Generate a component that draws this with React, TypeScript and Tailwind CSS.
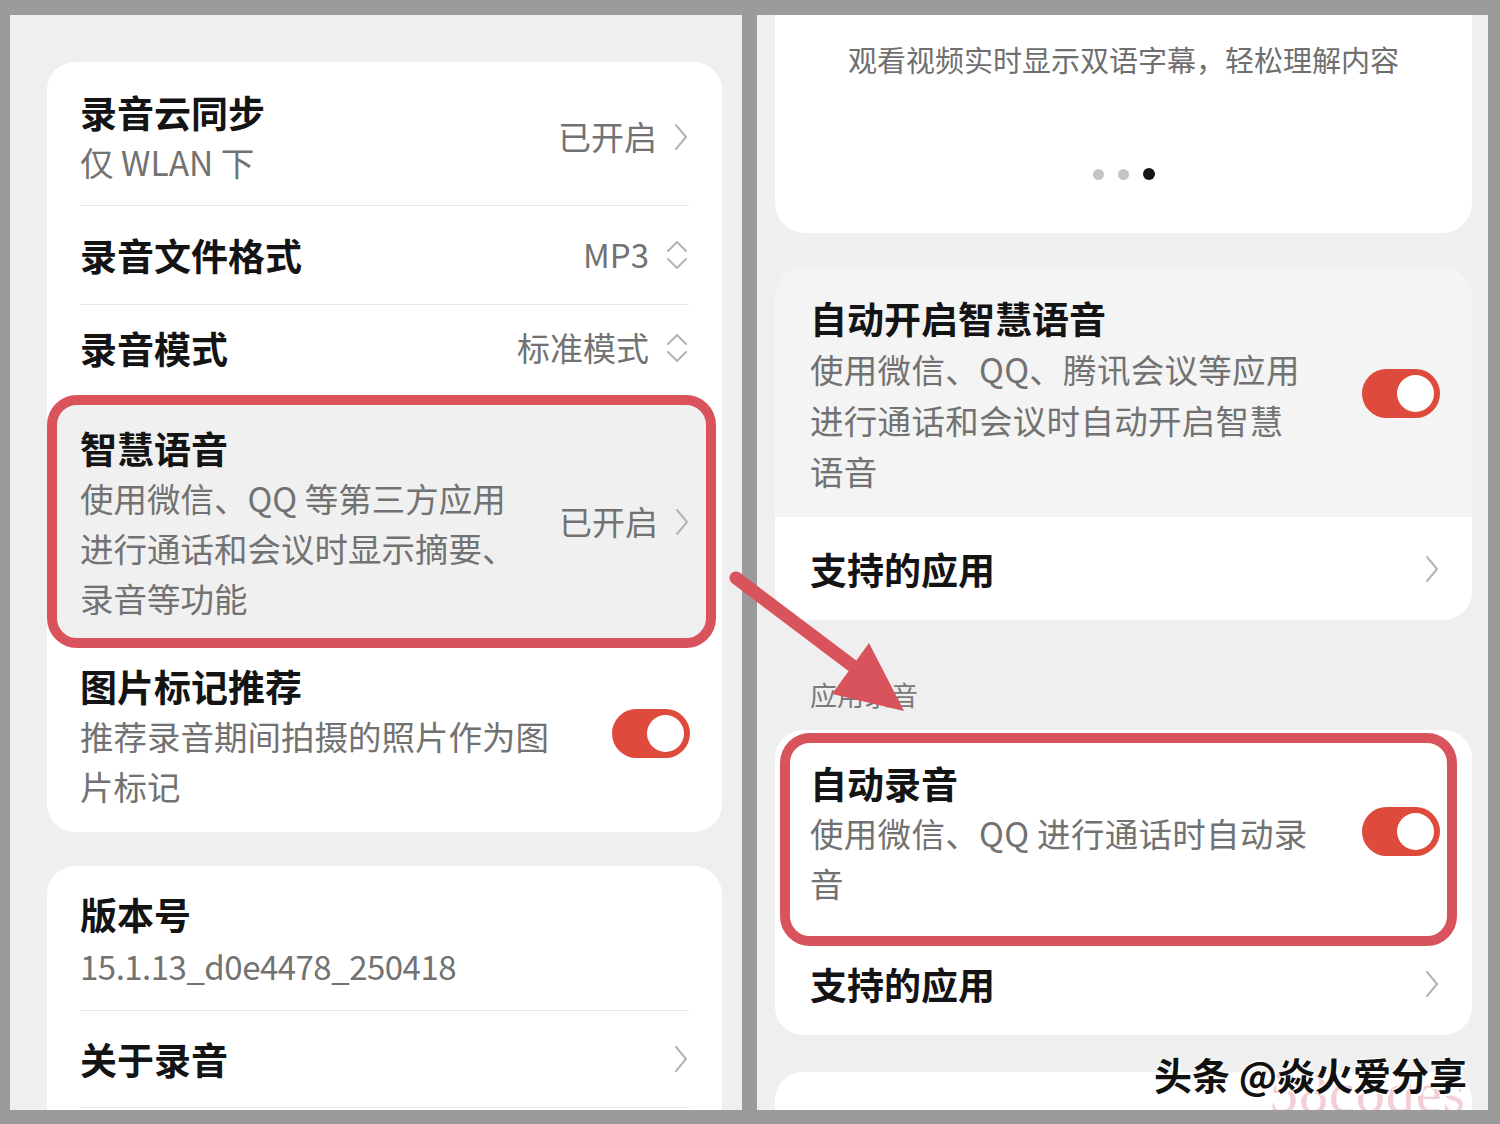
import React from 'react'

const FONT = "font-['Noto_Sans_CJK_SC',sans-serif]"

function ChevronRight() {
  return (
    <svg width="16" height="30" viewBox="0 0 16 30" fill="none">
      <path d="M3 3 L13 15 L3 27" stroke="#b4b4b4" strokeWidth="2" strokeLinecap="round" strokeLinejoin="round" />
    </svg>
  )
}

function UpDown() {
  return (
    <svg width="24" height="36" viewBox="0 0 24 36" fill="none">
      <path d="M3 14 L12 5 L21 14" stroke="#b4b4b4" strokeWidth="2" strokeLinecap="round" strokeLinejoin="round" />
      <path d="M3 22 L12 31 L21 22" stroke="#b4b4b4" strokeWidth="2" strokeLinecap="round" strokeLinejoin="round" />
    </svg>
  )
}

function Toggle() {
  return (
    <div className="flex h-[49px] w-[78px] shrink-0 items-center justify-end rounded-full bg-[#de4a3b] pr-[6px]">
      <div className="h-[37px] w-[37px] rounded-full bg-white" />
    </div>
  )
}

function Title({ children }: { children: React.ReactNode }) {
  return <div className="text-[37px] leading-[50px] font-semibold text-[#141414]">{children}</div>
}

function Desc({ lines }: { lines: string[] }) {
  return (
    <div className="text-[33.5px] leading-[50px] text-[#727272]">
      {lines.map((l) => (
        <div key={l}>{l}</div>
      ))}
    </div>
  )
}

function Value({ text, icon }: { text: string; icon: 'chevron' | 'updown' }) {
  return (
    <div className="flex items-center gap-[16px] text-[33px] text-[#727272]">
      <span>{text}</span>
      {icon === 'chevron' ? <ChevronRight /> : <UpDown />}
    </div>
  )
}

function Divider() {
  return <div className="mx-[33px] h-px bg-[#e9e9e9]" />
}

function LeftPanel() {
  return (
    <div className="flex h-[1095px] w-[732px] shrink-0 flex-col gap-[34px] overflow-hidden bg-[#efefef] pt-[47px] pl-[37px] pr-[20px]">
      {/* settings card */}
      <div className="overflow-hidden rounded-[28px] bg-white">
        <div className="flex h-[143px] items-center justify-between px-[33px] pt-[6px]">
          <div>
            <Title>录音云同步</Title>
            <div className="text-[33.5px] leading-[50px] text-[#727272]">仅 WLAN 下</div>
          </div>
          <Value text="已开启" icon="chevron" />
        </div>
        <Divider />
        <div className="flex h-[98px] items-center justify-between px-[33px]">
          <Title>录音文件格式</Title>
          <Value text="MP3" icon="updown" />
        </div>
        <Divider />
        <div className="flex h-[90px] items-center justify-between px-[33px] pb-[4px]">
          <Title>录音模式</Title>
          <Value text="标准模式" icon="updown" />
        </div>

        {/* highlighted row */}
        <div className="mr-[6px] flex h-[253px] items-center justify-between rounded-[30px] border-[10px] border-[#d8535b] bg-[#f0f0f0] pl-[23px] pr-[16px]">
          <div className="pt-[2px]">
            <Title>智慧语音</Title>
            <Desc lines={['使用微信、QQ 等第三方应用', '进行通话和会议时显示摘要、', '录音等功能']} />
          </div>
          <Value text="已开启" icon="chevron" />
        </div>

        <div className="flex h-[184px] items-start justify-between px-[33px] pt-[13px]">
          <div>
            <Title>图片标记推荐</Title>
            <Desc lines={['推荐录音期间拍摄的照片作为图', '片标记']} />
          </div>
          <div className="mt-[48px] mr-[-1px]">
            <Toggle />
          </div>
        </div>
      </div>

      {/* about card */}
      <div className="flex-1 rounded-t-[28px] bg-white">
        <div className="h-[144px] px-[33px] pt-[23px]">
          <Title>版本号</Title>
          <div className="mt-[2px] text-[33px] leading-[50px] tracking-[-0.5px] text-[#727272]">15.1.13_d0e4478_250418</div>
        </div>
        <Divider />
        <div className="flex h-[96px] items-center justify-between px-[33px]">
          <Title>关于录音</Title>
          <ChevronRight />
        </div>
        <Divider />
      </div>
    </div>
  )
}

function RightPanel() {
  return (
    <div className="relative flex h-[1095px] w-[731px] shrink-0 flex-col overflow-hidden bg-[#efefef] pl-[18px] pr-[16px]">
      {/* feature carousel card */}
      <div className="flex h-[218px] flex-col items-center rounded-b-[30px] bg-white pt-[24px]">
        <div className="text-[29px] leading-[40px] text-[#6f6f6f]">观看视频实时显示双语字幕，轻松理解内容</div>
        <div className="mt-[89px] flex items-center gap-[14px]">
          <div className="h-[11px] w-[11px] rounded-full bg-[#c4c4c4]" />
          <div className="h-[11px] w-[11px] rounded-full bg-[#c4c4c4]" />
          <div className="h-[12px] w-[12px] rounded-full bg-[#161616]" />
        </div>
      </div>

      {/* smart voice card */}
      <div className="mt-[35px] overflow-hidden rounded-[28px]">
        <div className="flex h-[249px] items-center justify-between bg-[#f4f4f4] pl-[35px] pr-[32px]">
          <div className="pt-[4px]">
            <Title>自动开启智慧语音</Title>
            <div className="text-[33.5px] leading-[51px] tracking-[0.3px] text-[#727272]">
              <div>使用微信、QQ、腾讯会议等应用</div>
              <div>进行通话和会议时自动开启智慧</div>
              <div>语音</div>
            </div>
          </div>
          <div className="mt-[2px]">
            <Toggle />
          </div>
        </div>
        <div className="flex h-[103px] items-center justify-between bg-white pl-[35px] pr-[32px]">
          <Title>支持的应用</Title>
          <ChevronRight />
        </div>
      </div>

      <div className="flex h-[110px] items-end pb-[17px] pl-[35px] text-[27px] leading-[36px] text-[#7a7a7a]">应用录音</div>

      {/* app recording card */}
      <div className="overflow-hidden rounded-[28px] bg-white pt-[3px]">
        <div className="ml-[5px] mr-[15px] flex h-[213px] items-center justify-between rounded-[30px] border-[10px] border-[#d8535b] bg-white pl-[20px] pr-[7px]">
          <div className="pb-[14px]">
            <Title>自动录音</Title>
            <div className="text-[33.5px] leading-[50px] tracking-[0.3px] text-[#727272]">
              <div>使用微信、QQ 进行通话时自动录</div>
              <div>音</div>
            </div>
          </div>
          <div className="mb-[16px]">
            <Toggle />
          </div>
        </div>
        <div className="flex h-[89px] items-center justify-between pb-[14px] pl-[35px] pr-[32px]">
          <Title>支持的应用</Title>
          <ChevronRight />
        </div>
      </div>

      <div className="mt-[37px] flex-1 rounded-t-[28px] bg-white" />

      {/* watermarks */}
      <div className="absolute left-[512px] top-[1046px] font-['Liberation_Serif',serif] text-[58px] leading-[64px] tracking-[1px] text-[#e4a1aa] opacity-50">
        58codes
      </div>
      <div className="absolute left-[397px] top-[1036px] text-[38px] leading-[46px] font-semibold text-[#111] [text-shadow:2px_2px_0_#fff,-1px_-1px_0_#fff]">
        头条 @焱火爱分享
      </div>
    </div>
  )
}

export default function App() {
  return (
    <div className={`relative flex h-[1124px] w-[1500px] gap-[15px] overflow-hidden bg-[#9b9b9b] pt-[15px] pl-[10px] ${FONT}`}>
      <LeftPanel />
      <RightPanel />

      {/* annotation arrow */}
      <svg className="pointer-events-none absolute left-0 top-0" width="1500" height="1124" viewBox="0 0 1500 1124">
        <line x1="736" y1="578" x2="858" y2="670" stroke="#d8535b" strokeWidth="13" strokeLinecap="round" />
        <polygon points="904,711 869,643 832,694" fill="#d8535b" />
      </svg>
    </div>
  )
}
